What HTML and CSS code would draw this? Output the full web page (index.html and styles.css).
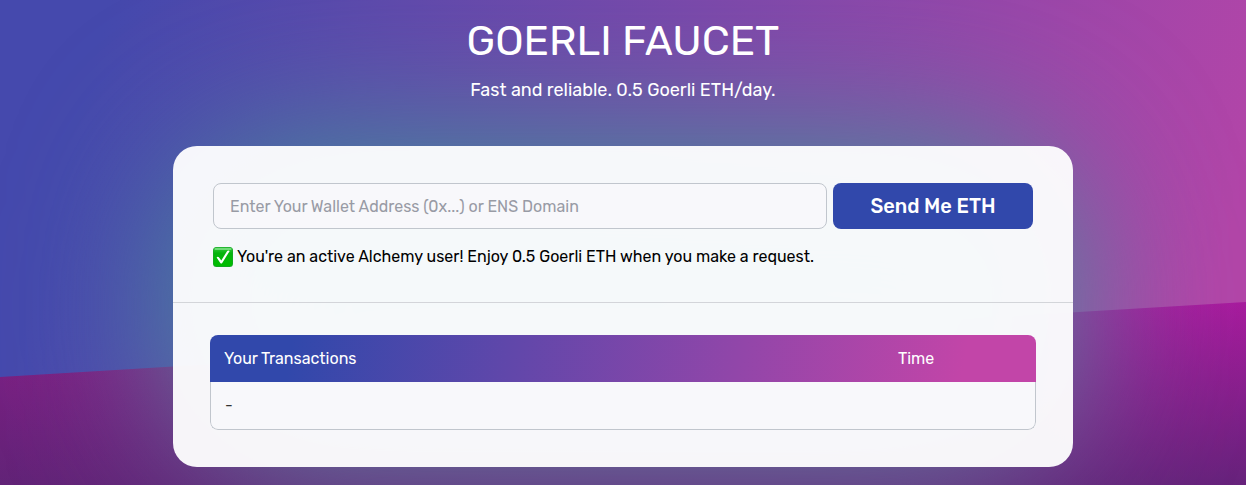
FILE: index.html
```html
<!DOCTYPE html>
<html lang="en">
<head>
<meta charset="utf-8">
<meta name="viewport" content="width=device-width, initial-scale=1">
<title>Goerli Faucet</title>
<link rel="stylesheet" href="styles.css">
</head>
<body class="page">
<div class="wedge" aria-hidden="true"></div>
<main class="content">
  <header class="hero">
    <h1 class="title">GOERLI FAUCET</h1>
    <p class="subtitle">Fast and reliable. 0.5 Goerli ETH/day.</p>
  </header>
  <div class="card">
    <section class="request">
      <form class="request-form">
        <input class="address" type="text" aria-label="Wallet address" placeholder="Enter Your Wallet Address (0x...) or ENS Domain">
        <button class="send" type="button">Send Me ETH</button>
      </form>
      <p class="status">
        <svg class="check" viewBox="0 0 20 20" aria-hidden="true">
          <defs>
            <linearGradient id="green" x1="0" y1="0" x2="0" y2="1">
              <stop offset="0" stop-color="#35c83c"/><stop offset=".3" stop-color="#04b40c"/><stop offset="1" stop-color="#00bd00"/>
            </linearGradient>
          </defs>
          <rect width="20" height="20" rx="3.5" fill="#18a42a"/>
          <rect x=".6" y=".6" width="18.8" height="18.6" rx="3" fill="url(#green)"/>
          <rect x="1.5" y=".9" width="17" height="2.1" rx="1" fill="#6fdc76"/>
          <path d="M3.6 10.6Q4.6 9 5.9 10.3L8.3 13.4 14.2 3.9Q15.4 2.9 16.7 4L9.2 15.9Q8.3 17 7.3 15.9Z" fill="#fff"/>
        </svg>
        <span>You're an active Alchemy user! Enjoy 0.5 Goerli ETH when you make a request.</span>
      </p>
    </section>
    <section class="history">
      <table class="transactions">
        <thead><tr><th>Your Transactions</th><th class="time">Time</th></tr></thead>
        <tbody><tr><td>-</td><td></td></tr></tbody>
      </table>
    </section>
  </div>
</main>
</body>
</html>
```
FILE: styles.css
```css
* { box-sizing: border-box; }

.page {
  margin: 0;
  min-height: 100vh;
  position: relative;
  overflow-x: hidden;
  font-family: Rubik, Inter, sans-serif;
  font-size: 16px;
  line-height: 24px;
  background: linear-gradient(105deg, #4549ad 0%, #4549ad 8%, #b245a8 94%);
}

.wedge {
  position: absolute;
  inset: 0;
  clip-path: polygon(0 377px, 100% 302px, 100% 100%, 0 100%);
  background:
    linear-gradient(176deg, rgba(50, 40, 96, 0) 62%, rgba(50, 40, 96, .6) 100%),
    linear-gradient(90deg, #7c2084 0%, #b41aa4 100%);
}

.content {
  position: relative;
  isolation: isolate;
  max-width: 900px;
  margin: 0 auto;
  padding: 16px 0 18px;
}

.hero { text-align: center; color: #fff; }

.title { margin: 0; font-size: 42px; line-height: 50px; font-weight: 400; }

.subtitle { margin: 12px 0 44px; font-size: 18px; line-height: 24px; }

.card {
  position: relative;
  border-radius: 24px;
  background: rgba(255, 255, 255, .95);
}

/* Teal glow behind the translucent card */
.card::before {
  content: "";
  position: absolute;
  inset: 0;
  z-index: -1;
  border-radius: 120px;
  background: linear-gradient(180deg, #41919a 0%, #41919a 60%, #6a82a4 85%);
  filter: blur(80px);
}

.request {
  padding: 37px 40px 33px;
  border-bottom: 1px solid #d3d5d9;
}

.request-form { display: flex; gap: 6px; }

.address {
  flex: 1;
  min-width: 0;
  height: 46px;
  padding: 0 16px;
  border: 1px solid #c1c6cd;
  border-radius: 8px;
  background: #f8f8fb;
  color: #000;
  font: inherit;
}

.address::placeholder { color: #989ba5; opacity: 1; }

.send {
  width: 200px;
  height: 46px;
  border: 0;
  border-radius: 8px;
  background: #3148ab;
  color: #fff;
  font: 500 20px/24px Rubik, Inter, sans-serif;
}

.status {
  display: flex;
  align-items: center;
  gap: 4px;
  margin: 16px 0 0;
  color: #000;
}

.check { width: 20px; height: 20px; flex: none; }

.history { padding: 32px 37px 37px; }

.transactions {
  width: 100%;
  table-layout: fixed;
  border-spacing: 0;
  border-radius: 8px;
  overflow: hidden;
  background: #f8f8fb;
}

.transactions thead { background: linear-gradient(100deg, #3148ab 10%, #c245a8 91%); }

.transactions th {
  height: 47px;
  padding: 0 14px;
  text-align: left;
  font-weight: 400;
  color: #fff;
}

.time { width: 152px; }

.transactions td {
  height: 48px;
  padding: 0 14px;
  border-bottom: 1px solid #c1c6cd;
  color: #333;
}

.transactions td:first-child { border-left: 1px solid #c1c6cd; border-bottom-left-radius: 8px; }
.transactions td:last-child { border-right: 1px solid #c1c6cd; border-bottom-right-radius: 8px; }
```
